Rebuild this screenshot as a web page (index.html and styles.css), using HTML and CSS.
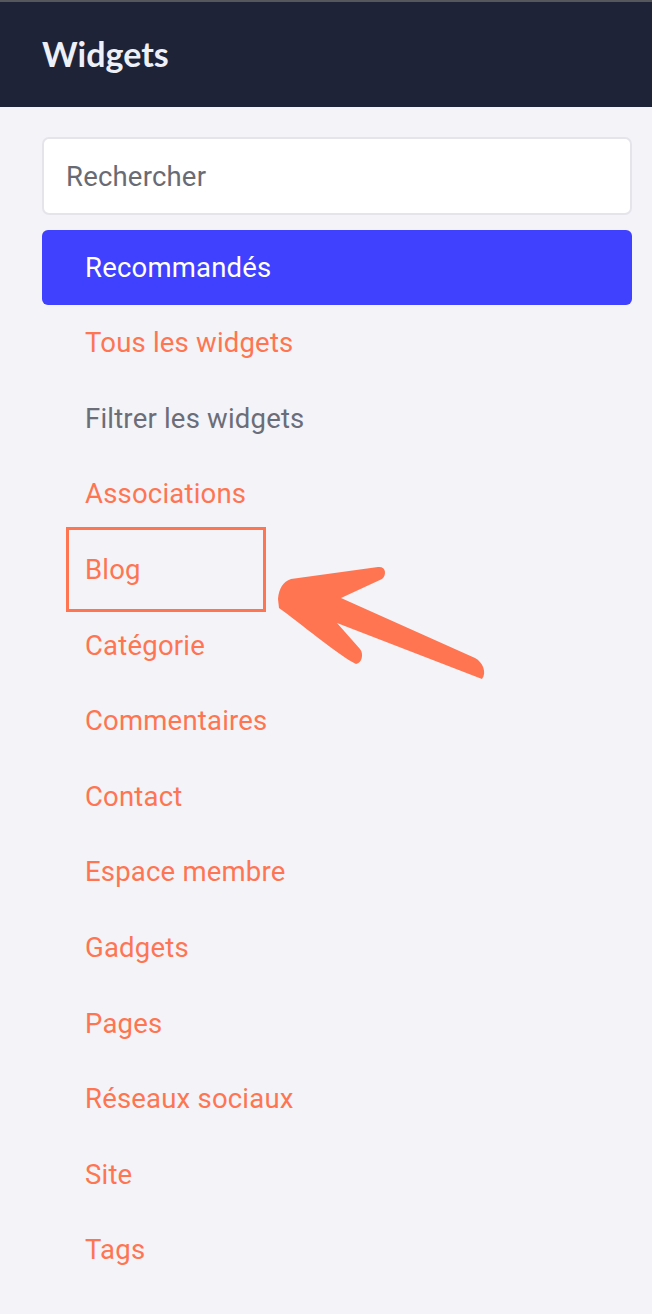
FILE: index.html
```html
<!doctype html>
<html lang="fr">
  <head>
    <meta charset="UTF-8" />
    <meta name="viewport" content="width=device-width, initial-scale=1.0" />
    <title>Widgets</title>
    <link rel="stylesheet" href="styles.css">
  </head>
  <body>
    <header class="topbar">
      <h1>Widgets</h1>
    </header>

    <main class="panel">
      <input class="search" type="text" placeholder="Rechercher" />

      <ul class="menu">
        <li class="menu-item active">Recommandés</li>
        <li class="menu-item">Tous les widgets</li>
        <li class="menu-item muted">Filtrer les widgets</li>
        <li class="menu-item">Associations</li>
        <li class="menu-item highlight">Blog</li>
        <li class="menu-item">Catégorie</li>
        <li class="menu-item">Commentaires</li>
        <li class="menu-item">Contact</li>
        <li class="menu-item">Espace membre</li>
        <li class="menu-item">Gadgets</li>
        <li class="menu-item">Pages</li>
        <li class="menu-item">Réseaux sociaux</li>
        <li class="menu-item">Site</li>
        <li class="menu-item">Tags</li>
      </ul>
    </main>

    <!-- annotation arrow pointing at Blog -->
    <svg class="arrow" viewBox="0 0 652 1314" xmlns="http://www.w3.org/2000/svg">
      <path
        d="M278,597 C279,586 283,580 291,577 L378,565 C386,564 387,573 382,577 L341,596 L475,656 C483,660 487,671 482,677 L337,621 L360,647 C364,652 362,661 356,662 C338,653 300,621 279,606 Z"
        fill="#ff7552"
      />
    </svg>
  </body>
</html>
```

FILE: styles.css
```css
* {
  box-sizing: border-box;
  margin: 0;
  padding: 0;
}

body {
  font-family: Roboto, "Liberation Sans", sans-serif;
  background: #f3f3f8;
  min-height: 100vh;
  border-top: 2px solid #55575c;
  position: relative;
}

.topbar {
  background: #1f2338;
  height: 105px;
  display: flex;
  align-items: center;
  padding-left: 42px;
}

.topbar h1 {
  font-family: Lato, "Open Sans", sans-serif;
  font-weight: bold;
  font-size: 34px;
  color: #eef0f8;
  padding-bottom: 2px;
}

.panel {
  padding: 30px 20px 0 42px;
}

.search {
  display: block;
  width: 590px;
  height: 78px;
  border: 2px solid #e4e4ea;
  border-radius: 7px;
  background: #fff;
  padding: 0 22px;
  font-family: Roboto, sans-serif;
  font-size: 27.5px;
  letter-spacing: 0.2px;
  color: #333;
  outline: none;
}

.search::placeholder {
  color: #6a6b72;
}

.menu {
  list-style: none;
  margin-top: 15px;
}

.menu-item {
  width: 590px;
  height: 75.6px;
  display: flex;
  align-items: center;
  padding-left: 43px;
  font-size: 27.5px;
  letter-spacing: 0.2px;
  color: #ff7552;
}

.menu-item.active {
  background: #4040ff;
  color: #fff;
  border-radius: 6px;
  height: 75px;
}

.menu-item.muted {
  color: #6b6d78;
}

.menu-item.highlight {
  position: relative;
}

.menu-item.highlight::after {
  content: "";
  position: absolute;
  left: 24px;
  top: -5px;
  width: 194px;
  height: 79px;
  border: 3px solid #ff7552;
}

.arrow {
  position: absolute;
  left: 0;
  top: 0;
  width: 652px;
  height: 1314px;
  pointer-events: none;
}
```
